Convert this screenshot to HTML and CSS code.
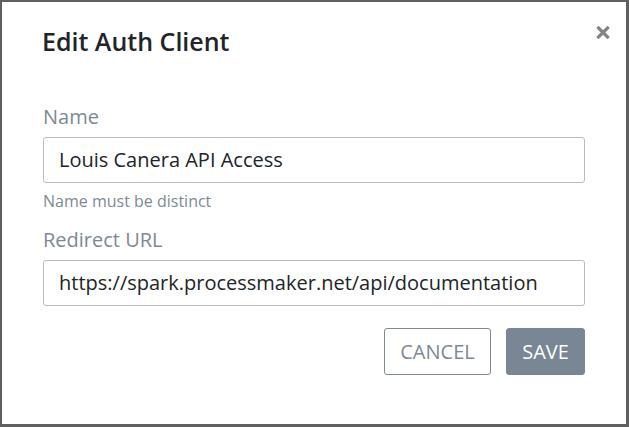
FILE: index.html
```html
<!DOCTYPE html>
<html>
<head>
<meta charset="utf-8">
<link rel="stylesheet" href="styles.css">
</head>
<body>
<div class="modal">
  <div class="modal-header">
    <h1 class="modal-title">Edit Auth Client</h1>
    <button class="close" aria-label="Close">
      <svg width="14" height="13" viewBox="0 0 14 13"><path d="M2.5 2 L11.5 11 M11.5 2 L2.5 11" stroke="#858585" stroke-width="3.2" stroke-linecap="square"/></svg>
    </button>
  </div>
  <div class="modal-body">
    <div class="form-group">
      <label class="label">Name</label>
      <div class="input">Louis Canera API Access</div>
      <small class="help">Name must be distinct</small>
    </div>
    <div class="form-group">
      <label class="label">Redirect URL</label>
      <div class="input">https://spark.processmaker.net/api/documentation</div>
    </div>
  </div>
  <div class="modal-footer">
    <button class="btn btn-outline">CANCEL</button>
    <button class="btn btn-secondary">SAVE</button>
  </div>
</div>
</body>
</html>
```
FILE: styles.css
```css
html, body {
  margin: 0;
  padding: 0;
  background: #fff;
}
body {
  font-family: "Open Sans", "Liberation Sans", sans-serif;
  width: 629px;
  height: 427px;
  overflow: hidden;
}
.modal {
  box-sizing: border-box;
  width: 629px;
  height: 427px;
  border: 2px solid #606060;
  border-right-width: 3px;
  border-bottom-width: 3px;
  background: #fff;
  display: flex;
  flex-direction: column;
}
.modal-header {
  display: flex;
  justify-content: space-between;
  align-items: flex-start;
  padding: 24px 16px 0 40px;
}
.modal-title {
  margin: 0;
  font-size: 25px;
  font-weight: 600;
  color: #212529;
  line-height: 30px;
}
.close {
  border: 0;
  background: none;
  padding: 0;
  margin-top: 0;
  width: 14px;
  height: 13px;
  display: block;
}
.close svg { display: block; }
.modal-body {
  padding: 46px 41px 0 41px;
}
.form-group {
  display: flex;
  flex-direction: column;
  margin-bottom: 12px;
}
.label {
  font-size: 20px;
  color: #7d8a96;
  line-height: 30px;
  margin-bottom: 5px;
}
.input {
  box-sizing: border-box;
  height: 46px;
  border: 1px solid #b6bcc2;
  border-radius: 3px;
  padding: 0 15px;
  font-size: 20px;
  color: #212529;
  line-height: 44px;
  white-space: nowrap;
}
.help {
  font-size: 16px;
  color: #7d8a96;
  line-height: 24px;
  margin-top: 6px;
}
.modal-footer {
  display: flex;
  justify-content: flex-end;
  gap: 15px;
  padding: 10px 41px 0 0;
}
.btn {
  box-sizing: border-box;
  height: 47px;
  border-radius: 3px;
  font-family: "Open Sans", "Liberation Sans", sans-serif;
  font-size: 20px;
  padding: 0;
  cursor: pointer;
}
.btn-outline {
  width: 107px;
  background: #fff;
  border: 1px solid #7d8a96;
  color: #7d8a96;
}
.btn-secondary {
  width: 79px;
  background: #788793;
  border: 1px solid #788793;
  color: #fff;
}
```
